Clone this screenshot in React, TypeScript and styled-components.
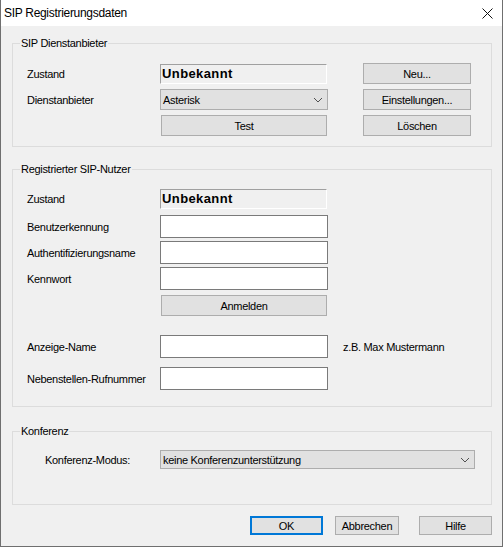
import styled, { createGlobalStyle } from "styled-components";

const Global = createGlobalStyle`
  html, body {
    margin: 0;
    padding: 0;
    background: #f0f0f0;
    overflow: hidden;
  }
  * { box-sizing: border-box; }
`;

const Dialog = styled.div`
  width: 503px;
  height: 547px;
  background: #f0f0f0;
  border: 1px solid #6f6f6f;
  border-top: none;
  font-family: "Liberation Sans", Arial, sans-serif;
  font-size: 11px;
  letter-spacing: -0.3px;
  color: #000;
  display: flex;
  flex-direction: column;
`;

const TitleBar = styled.div`
  height: 26px;
  flex: none;
  background: #fff;
  display: flex;
  align-items: center;
  justify-content: space-between;
  padding: 0 9px 0 3px;
  font-size: 12px;
`;

const Body = styled.div`
  padding: 11px 10px 0 11px;
  display: flex;
  flex-direction: column;
`;

const Group = styled.fieldset<{ $mt?: number; $pt: number; $pb: number }>`
  margin: ${(p) => p.$mt ?? 0}px 0 0 0;
  padding: ${(p) => p.$pt}px 0 ${(p) => p.$pb}px 14px;
  border: 1px solid #dcdcdc;
  min-width: 0;
`;

const Legend = styled.legend`
  margin-left: -7px;
  padding: 0 1px;
  line-height: 13px;
  font-size: 11px;
`;

const ProviderGrid = styled.div`
  display: grid;
  grid-template-columns: 133px 202px 108px;
  grid-auto-rows: 21px;
  row-gap: 5px;
  align-items: center;
  justify-items: start;
`;

const Label = styled.span<{ $w?: number }>`
  width: ${(p) => p.$w ?? 133}px;
  flex: none;
  white-space: nowrap;
`;

const Status = styled.div`
  width: 167px;
  height: 20px;
  border: 1px solid #fff;
  border-top-color: #a0a0a0;
  border-left-color: #a0a0a0;
  background: #f0f0f0;
  font-weight: bold;
  font-size: 13px;
  letter-spacing: 0.4px;
  line-height: 18px;
  padding-left: 1px;
`;

const Button = styled.button<{ $w: number; $h?: number; $focus?: boolean; $ml?: number }>`
  width: ${(p) => p.$w}px;
  height: ${(p) => p.$h ?? 21}px;
  margin-left: ${(p) => p.$ml ?? 0}px;
  background: #e1e1e1;
  border: ${(p) => (p.$focus ? "2px solid #0078d7" : "1px solid #adadad")};
  font-family: inherit;
  font-size: 11px;
  letter-spacing: -0.3px;
  color: #000;
  padding: 0;
  border-radius: 0;
`;

const Combo = styled.div<{ $w: number; $h: number }>`
  width: ${(p) => p.$w}px;
  height: ${(p) => p.$h}px;
  background: #e1e1e1;
  border: 1px solid #adadad;
  display: flex;
  align-items: center;
  justify-content: space-between;
  padding: 0 4px 0 2px;
`;

const Row = styled.div<{ $mt?: number }>`
  display: flex;
  align-items: center;
  margin-top: ${(p) => p.$mt ?? 0}px;
`;

const Input = styled.input`
  width: 168px;
  height: 23px;
  border: 1px solid #7a7a7a;
  background: #fff;
  margin: 0;
  padding: 0 2px;
  font-family: inherit;
  font-size: 11px;
  outline: none;
`;

const Hint = styled.span`
  margin-left: 15px;
  white-space: nowrap;
`;

const Footer = styled.div`
  display: flex;
  justify-content: flex-end;
  margin-top: 11px;
  gap: 12px;
`;

const Chevron = () => (
  <svg width="10" height="6" viewBox="0 0 10 6">
    <path d="M1 1 L5 5 L9 1" fill="none" stroke="#505050" strokeWidth="1" />
  </svg>
);

const CloseIcon = () => (
  <svg width="11" height="11" viewBox="0 0 11 11">
    <path d="M0.5 0.5 L10.5 10.5 M10.5 0.5 L0.5 10.5" stroke="#111" strokeWidth="1" />
  </svg>
);

function App() {
  return (
    <>
      <Global />
      <Dialog>
        <TitleBar>
          <span>SIP Registrierungsdaten</span>
          <CloseIcon />
        </TitleBar>
        <Body>
          <Group $pt={13} $pb={10}>
            <Legend>SIP Dienstanbieter</Legend>
            <ProviderGrid>
              <Label>Zustand</Label>
              <Status>Unbekannt</Status>
              <Button $w={108} $h={21} $ml={1}>Neu...</Button>
              <Label>Dienstanbieter</Label>
              <Combo $w={168} $h={21}>
                <span>Asterisk</span>
                <Chevron />
              </Combo>
              <Button $w={108} $ml={1}>Einstellungen...</Button>
              <span />
              <Button $w={166} $ml={1}>Test</Button>
              <Button $w={108} $ml={1}>Löschen</Button>
            </ProviderGrid>
          </Group>

          <Group $mt={16} $pt={13} $pb={16}>
            <Legend>Registrierter SIP-Nutzer</Legend>
            <Row>
              <Label>Zustand</Label>
              <Status>Unbekannt</Status>
            </Row>
            <Row $mt={6}>
              <Label>Benutzerkennung</Label>
              <Input />
            </Row>
            <Row $mt={3}>
              <Label>Authentifizierungsname</Label>
              <Input />
            </Row>
            <Row $mt={3}>
              <Label>Kennwort</Label>
              <Input type="password" />
            </Row>
            <Row $mt={5}>
              <Label />
              <Button $w={166} $ml={1}>Anmelden</Button>
            </Row>
            <Row $mt={19}>
              <Label>Anzeige-Name</Label>
              <Input />
              <Hint>z.B. Max Mustermann</Hint>
            </Row>
            <Row $mt={9}>
              <Label>Nebenstellen-Rufnummer</Label>
              <Input />
            </Row>
          </Group>

          <Group $mt={18} $pt={12} $pb={35}>
            <Legend>Konferenz</Legend>
            <Row>
              <Label $w={115} style={{ marginLeft: 18 }}>Konferenz-Modus:</Label>
              <Combo $w={315} $h={19}>
                <span>keine Konferenzunterstützung</span>
                <Chevron />
              </Combo>
            </Row>
          </Group>

          <Footer>
            <Button $w={73} $h={19} $focus>OK</Button>
            <Button $w={64} $h={19}>Abbrechen</Button>
            <Button $w={73} $h={19} $ml={8}>Hilfe</Button>
          </Footer>
        </Body>
      </Dialog>
    </>
  );
}

export default App;
